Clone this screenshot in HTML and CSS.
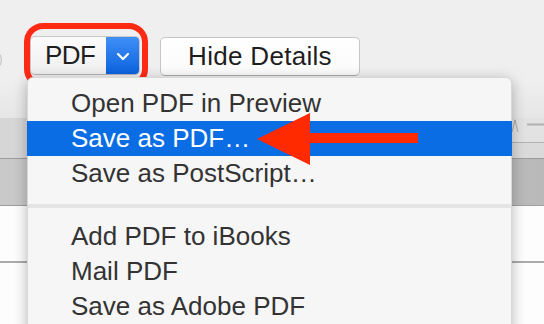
FILE: index.html
```html
<!DOCTYPE html>
<html>
<head>
<meta charset="utf-8">
<link rel="stylesheet" href="styles.css">
</head>
<body>
<div class="window">
  <div class="toolbar">
    <span class="help"></span>
    <div class="pdf-btn">
      <span class="pdf-label">PDF</span>
      <span class="pdf-arrow">
        <svg width="14" height="9" viewBox="0 0 14 9"><polyline points="2,2 7,7 12,2" fill="none" stroke="#fff" stroke-width="2.2" stroke-linecap="round" stroke-linejoin="round"/></svg>
      </span>
    </div>
    <div class="btn">Hide Details</div>
  </div>
  <div class="band1">
    <div class="band1-fill"></div>
    <div class="band1-right">
      <div class="hdr">
        <svg width="32" height="25" viewBox="0 0 32 25"><polyline points="0,14 3,2 6,14" fill="none" stroke="#a8a8a8" stroke-width="1"/><line x1="15" y1="6.5" x2="32" y2="6.5" stroke="#b0b0b0" stroke-width="2"/></svg>
      </div>
    </div>
  </div>
  <div class="band2"></div>
  <div class="white-row"></div>
  <div class="white-rest"></div>
</div>

<div class="ring"></div>

<div class="menu">
  <div class="item">Open PDF in Preview</div>
  <div class="item selected">Save as PDF…</div>
  <div class="item">Save as PostScript…</div>
  <div class="sep"><div class="sep-line"></div></div>
  <div class="item">Add PDF to iBooks</div>
  <div class="item">Mail PDF</div>
  <div class="item">Save as Adobe PDF</div>
</div>

<svg class="arrow" width="544" height="324" viewBox="0 0 544 324">
  <rect x="300" y="133" width="118" height="10" fill="#ff2a00"/>
  <polygon points="257,139 310,113 310,165" fill="#ff2a00"/>
</svg>
</body>
</html>
```

FILE: styles.css
```css
* { box-sizing: border-box; }
html, body { margin: 0; padding: 0; }
body {
  width: 544px;
  height: 324px;
  overflow: hidden;
  position: relative;
  background: #ffffff;
  font-family: "Liberation Sans", Arial, sans-serif;
}
.window { display: flex; flex-direction: column; height: 324px; }
.toolbar {
  height: 118px;
  background: linear-gradient(#efefef 0, #efefef 80px, #e6e6e6 118px);
  display: flex;
  align-items: flex-start;
  padding-top: 37px;
}
.help {
  width: 22px; height: 22px;
  margin-left: -20px; margin-top: 12px; margin-right: 28px;
  border-radius: 50%;
  background: #e9e9e9;
  border: 1.5px solid #c2c2c2;
  flex: none;
}
.pdf-btn {
  width: 110px; height: 39px;
  display: flex;
  border: 1px solid #c9c9c9;
  border-bottom-color: #b4b4b4;
  border-radius: 5px;
  overflow: hidden;
  background: linear-gradient(#fbfbfb, #efefef);
  margin-top: -1px;
  margin-right: 20px;
}
.pdf-label {
  flex: 1;
  font-size: 26px;
  color: #1e1e1e;
  padding-left: 14px;
  line-height: 37px;
  letter-spacing: -0.5px;
}
.pdf-arrow {
  width: 33px;
  background: linear-gradient(#3f8ff6, #0c62df);
  display: flex; align-items: center; justify-content: center;
}
.pdf-arrow svg { margin-top: 1px; }
.btn {
  width: 200px; height: 39px;
  background: linear-gradient(#ffffff, #fbfbfb);
  border: 1px solid #c6c6c6;
  border-bottom-color: #ababab;
  border-radius: 5px;
  font-size: 26px;
  color: #1e1e1e;
  text-align: center;
  line-height: 37px;
  letter-spacing: 0.3px;
}
.band1 {
  height: 41px;
  display: flex;
  border-bottom: 1px solid #9c9c9c;
  background: #d6d6d6;
}
.band1-fill { flex: 1; }
.band1-right { width: 32px; background: #dadada; }
.hdr { height: 25px; background: #e2e2e2; border-bottom: 1px solid #b3b3b3; }
.hdr svg { display: block; }
.band2 {
  height: 47px;
  background: linear-gradient(90deg, #c9c9c9, #b9b9b9);
  border-bottom: 1px solid #9e9e9e;
}
.white-row { height: 57px; border-bottom: 2px solid #ababab; background: #fdfdfd; }
.white-rest { flex: 1; background: #fdfdfd; }

.ring {
  position: absolute;
  left: 24px; top: 23px;
  width: 124px; height: 65px;
  border: 6px solid #ff2a14;
  border-radius: 19px;
}

.menu {
  position: absolute;
  left: 27px; top: 77px;
  width: 485px; height: 260px;
  background: #f6f6f6;
  border-radius: 6px 6px 0 0;
  border: 1px solid rgba(0,0,0,0.12);
  box-shadow: 0 3px 14px rgba(0,0,0,0.28);
  padding-top: 8px;
}
.item {
  height: 35px;
  line-height: 35px;
  padding-left: 43px;
  font-size: 26px;
  color: #333333;
}
.item.selected {
  background: #0a6de3;
  color: #ffffff;
  margin: 0 -1px;
  padding-left: 44px;
}
.sep { height: 28px; padding-top: 13px; }
.sep-line { height: 4px; background: #e4e4e4; }
.arrow { position: absolute; left: 0; top: 0; }
```
